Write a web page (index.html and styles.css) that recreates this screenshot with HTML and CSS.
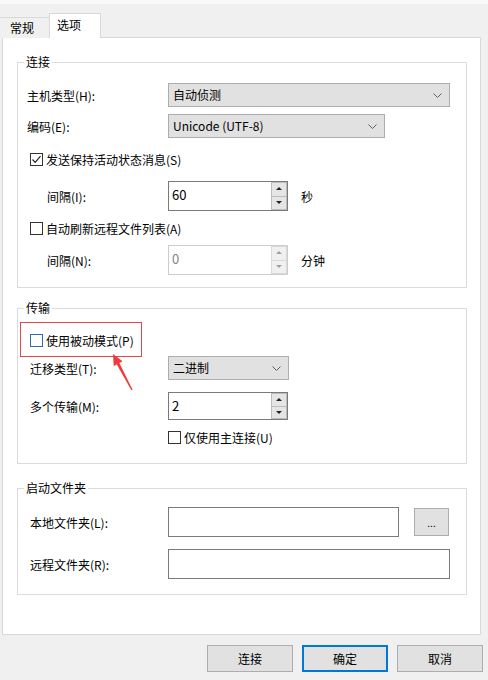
FILE: index.html
```html
<!DOCTYPE html>
<html lang="zh-CN">
<head>
    <meta charset="UTF-8">
    <title>选项</title>
    <link rel="stylesheet" href="styles.css">
</head>
<body>
    <div class="tabs">
        <div class="tab">常规</div>
        <div class="tab active">选项</div>
    </div>

    <div class="panel">
        <fieldset class="group group-conn">
            <legend>连接</legend>
            <div class="row r-first">
                <span class="lbl tight">主机类型(H):</span>
                <div class="select w-282">自动侦测<svg class="chev" width="9" height="5" viewBox="0 0 9 5"><path d="M0.5 0.5L4.5 4.5L8.5 0.5" fill="none" stroke="#606060"/></svg></div>
            </div>
            <div class="row r-sel">
                <span class="lbl tight">编码(E):</span>
                <div class="select w-217">Unicode (UTF-8)<svg class="chev" width="9" height="5" viewBox="0 0 9 5"><path d="M0.5 0.5L4.5 4.5L8.5 0.5" fill="none" stroke="#606060"/></svg></div>
            </div>
            <div class="row r-check">
                <span class="check checked"><svg width="11" height="11" viewBox="0 0 11 11"><path d="M1.5 5.5L4.2 8.3L9.5 2.2" fill="none" stroke="#222" stroke-width="1.2"/></svg></span>
                <span>发送保持活动状态消息(S)</span>
            </div>
            <div class="row r-spin">
                <span class="lbl indent">间隔(I):</span>
                <div class="spin">
                    <span class="val">60</span>
                    <div class="arrows"><span class="up"></span><span class="down"></span></div>
                </div>
                <span class="unit">秒</span>
            </div>
            <div class="row r-check2">
                <span class="check"></span>
                <span>自动刷新远程文件列表(A)</span>
            </div>
            <div class="row r-spin2">
                <span class="lbl indent">间隔(N):</span>
                <div class="spin disabled">
                    <span class="val">0</span>
                    <div class="arrows"><span class="up"></span><span class="down"></span></div>
                </div>
                <span class="unit">分钟</span>
            </div>
        </fieldset>

        <fieldset class="group group-xfer">
            <legend>传输</legend>
            <div class="row r-passive">
                <span class="check focus"></span>
                <span>使用被动模式(P)</span>
                <div class="mark"></div>
                <svg class="arrow" width="40" height="50" viewBox="0 0 40 50">
                    <polygon points="13,9 22.5,16.3 19.4,18 32.6,44.8 31.4,45.3 16.8,19.4 13.7,21" fill="#ee3b3b"/>
                </svg>
            </div>
            <div class="row r-type">
                <span class="lbl">迁移类型(T):</span>
                <div class="select w-121">二进制<svg class="chev" width="9" height="5" viewBox="0 0 9 5"><path d="M0.5 0.5L4.5 4.5L8.5 0.5" fill="none" stroke="#606060"/></svg></div>
            </div>
            <div class="row r-multi">
                <span class="lbl">多个传输(M):</span>
                <div class="spin small">
                    <span class="val">2</span>
                    <div class="arrows"><span class="up"></span><span class="down"></span></div>
                </div>
            </div>
            <div class="row r-main">
                <span class="check"></span>
                <span>仅使用主连接(U)</span>
            </div>
        </fieldset>

        <fieldset class="group group-dirs">
            <legend>启动文件夹</legend>
            <div class="row r-local">
                <span class="lbl">本地文件夹(L):</span>
                <div class="text w-231"></div>
                <button class="browse">...</button>
            </div>
            <div class="row r-remote">
                <span class="lbl">远程文件夹(R):</span>
                <div class="text w-282"></div>
            </div>
        </fieldset>
    </div>

    <div class="buttons">
        <button class="btn">连接</button>
        <button class="btn default">确定</button>
        <button class="btn">取消</button>
    </div>
</body>
</html>
```

FILE: styles.css
```css
body {
    margin: 0;
    background: #f0f0f0;
    border-top: 4px solid #f8f8f8;
    font-family: "Noto Sans CJK SC", "Microsoft YaHei", sans-serif;
    font-size: 12px;
    color: #000;
}

/* tabs */
.tabs {
    display: flex;
    align-items: flex-end;
    padding-top: 9px;
    margin-left: -1px;
}

.tab {
    box-sizing: border-box;
    flex: none;
    white-space: nowrap;
    height: 21px;
    line-height: 19px;
    padding: 0 0 0 10px;
    border: 1px solid #d9d9d9;
    border-bottom: none;
    background: #f0f0f0;
    width: 51px;
}

.tab.active {
    position: relative;
    z-index: 1;
    height: 25px;
    line-height: 22px;
    width: 52px;
    padding: 0 0 0 7px;
    margin-left: -1px;
    background: #fff;
}

.panel {
    box-sizing: border-box;
    margin: -1px 0 0 2px;
    width: 479px;
    background: #fff;
    border: 1px solid #d9d9d9;
    padding-bottom: 39px;
}

/* groups */
.group {
    box-sizing: border-box;
    width: 450px;
    margin: 0 0 0 14px;
    padding: 0 12px;
    border: 1px solid #dcdcdc;
    min-width: 0;
}

.group legend {
    padding: 0 2px;
    margin-left: -6px;
    line-height: 16px;
}

.group-conn { margin-top: 16px; padding-bottom: 12px; }
.group-xfer { margin-top: 12px; padding-bottom: 16px; }
.group-dirs { margin-top: 16px; padding-bottom: 15px; }

.row {
    display: flex;
    align-items: center;
    position: relative;
}

.r-first  { margin-top: 13px; height: 24px; }
.r-sel    { margin-top: 7px;  height: 24px; }
.r-check  { margin-top: 11px; height: 20px; }
.r-spin   { margin-top: 12px; height: 30px; }
.r-check2 { margin-top: 7px;  height: 20px; }
.r-spin2  { margin-top: 7px;  height: 30px; }

.r-passive { margin-top: 14px; height: 20px; }
.r-type    { margin-top: 6px;  height: 24px; }
.r-multi   { margin-top: 12px; height: 28px; }
.r-main    { margin-top: 7px;  height: 20px; padding-left: 138px; }

.r-local  { margin-top: 11px; height: 30px; }
.r-remote { margin-top: 12px; height: 30px; }

.lbl {
    width: 138px;
    flex: none;
    box-sizing: border-box;
}

.lbl.tight {
    padding-left: 0;
    margin-left: -3px;
    width: 141px;
}

.lbl.indent {
    padding-left: 17px;
}

/* combo box */
.select {
    box-sizing: border-box;
    height: 24px;
    line-height: 22px;
    padding-left: 4px;
    background: #e1e1e1;
    border: 1px solid #adadad;
    position: relative;
}

.select .chev {
    position: absolute;
    right: 7px;
    top: 9px;
}

.w-282 { width: 282px; }
.w-217 { width: 217px; }
.w-121 { width: 121px; }
.w-231 { width: 231px; }

/* checkbox */
.check {
    box-sizing: border-box;
    width: 13px;
    height: 13px;
    border: 1px solid #333;
    background: #fff;
    margin-right: 3px;
    display: flex;
    align-items: center;
    justify-content: center;
    flex: none;
}

.check.focus {
    border-color: #2b6cb5;
}

/* spin box */
.spin {
    box-sizing: border-box;
    width: 120px;
    height: 30px;
    border: 1px solid #7a7a7a;
    position: relative;
}

.spin.small { height: 28px; }

.spin .val {
    position: absolute;
    left: 3px;
    top: 3px;
    font-size: 13px;
}

.spin .arrows {
    position: absolute;
    right: 0;
    top: 0;
    bottom: 0;
    width: 16px;
    display: flex;
    flex-direction: column;
}

.spin .arrows span {
    flex: 1;
    box-sizing: border-box;
    background: #e5e5e5;
    border: 1px solid #bcbcbc;
    position: relative;
}

.spin .arrows .down { border-top: none; }

.spin .arrows span::after {
    content: "";
    position: absolute;
    left: 4px;
    top: 4px;
    border-left: 3px solid transparent;
    border-right: 3px solid transparent;
}

.spin .arrows .up::after { border-bottom: 3px solid #222; }
.spin .arrows .down::after { border-top: 3px solid #222; }

.spin.disabled { border-color: #cccccc; }
.spin.disabled .val { color: #838383; }
.spin.disabled .arrows span { background: #f0f0f0; border-color: #dadada; }
.spin.disabled .arrows .up::after { border-bottom-color: #a0a0a0; }
.spin.disabled .arrows .down::after { border-top-color: #a0a0a0; }

.unit { margin-left: 13px; }

/* text inputs */
.text {
    box-sizing: border-box;
    height: 30px;
    border: 1px solid #7a7a7a;
    background: #fff;
}

.browse {
    box-sizing: border-box;
    margin-left: 15px;
    width: 35px;
    height: 28px;
    background: #e1e1e1;
    border: 1px solid #adadad;
    font: inherit;
    font-size: 10px;
    padding: 0;
}

/* annotation */
.mark {
    position: absolute;
    left: -10px;
    top: -8px;
    width: 122px;
    height: 35px;
    box-sizing: border-box;
    border: 1px solid #e4464a;
}

.arrow {
    position: absolute;
    left: 70px;
    top: 15px;
    z-index: 2;
}

/* dialog buttons */
.buttons {
    display: flex;
    justify-content: flex-end;
    gap: 9px;
    margin: 10px 5px 0 0;
}

.btn {
    box-sizing: border-box;
    width: 86px;
    height: 27px;
    background: #e1e1e1;
    border: 1px solid #adadad;
    font: inherit;
    color: #000;
    padding: 0;
}

.btn.default {
    border: 2px solid #0078d7;
}
```
